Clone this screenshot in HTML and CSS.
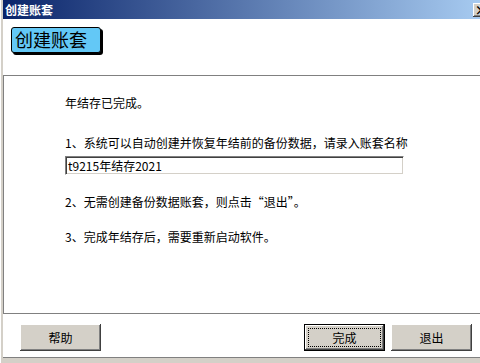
FILE: index.html
```html
<!DOCTYPE html>
<html lang="zh-CN">
<head>
<meta charset="utf-8">
<title>创建账套</title>
<link rel="stylesheet" href="styles.css">
</head>
<body>
<div class="window">
  <div class="titlebar">
    <span class="title">创建账套</span>
    <span class="close">×</span>
  </div>
  <div class="client">
    <div class="header">
      <div class="label">创建账套</div>
    </div>
    <div class="panel">
      <p class="line first">年结存已完成。</p>
      <p class="line second">1、系统可以自动创建并恢复年结前的备份数据，请录入账套名称</p>
      <div class="input">t9215年结存2021</div>
      <p class="line third">2、无需创建备份数据账套，则点击“退出”。</p>
      <p class="line fourth">3、完成年结存后，需要重新启动软件。</p>
    </div>
    <div class="footer">
      <div class="btn">帮助</div>
      <div class="right">
        <div class="btn default"><span class="focus">完成</span></div>
        <div class="btn">退出</div>
      </div>
    </div>
  </div>
</div>
</body>
</html>
```
FILE: styles.css
```css
* { box-sizing: border-box; }
html, body { margin: 0; padding: 0; }
body {
  width: 480px;
  height: 363px;
  overflow: hidden;
  font-family: "Noto Sans CJK SC", "Liberation Sans", sans-serif;
  font-size: 12px;
  color: #000;
}
.window {
  width: 480px;
  height: 363px;
  background: #d4d0c8;
  display: flex;
  flex-direction: column;
  overflow: hidden;
  border-left: 1px solid #ffffff;
}
.titlebar {
  height: 19px;
  margin-left: 2px;
  background: linear-gradient(to right, #0a246a, #a6caf0);
  display: flex;
  justify-content: space-between;
  align-items: flex-start;
  color: #fff;
  font-weight: bold;
  font-size: 12px;
  line-height: 19px;
  padding-left: 2px;
}
.close {
  width: 16px;
  height: 14px;
  margin-top: 3px;
  margin-right: -9px;
  background: #d4d0c8;
  color: #000;
  font-size: 13px;
  line-height: 13px;
  text-align: center;
  font-weight: bold;
  box-shadow: inset -1px -1px #404040, inset 1px 1px #fff, inset -2px -2px #808080;
}
.client {
  height: 339px;
  margin-left: 2px;
  background: #fff;
  display: flex;
  flex-direction: column;
  border-bottom: 1px solid #808080;
}
.header {
  height: 56px;
  padding: 8px 0 0 8px;
}
.label {
  width: 90px;
  height: 26px;
  border: 1px solid #000;
  border-radius: 3px;
  background: #63c8f6;
  box-shadow: 2px 2px 0 #000;
  font-size: 18px;
  line-height: 23px;
  padding-left: 3px;
}
.panel {
  height: 239px;
  border-top: 1px solid #808080;
  border-left: 1px solid #808080;
  border-bottom: 1px solid #808080;
  padding-left: 61px;
}
.line {
  margin: 0;
  line-height: 14px;
  white-space: nowrap;
}
.first { margin-top: 20px; }
.second { margin-top: 26px; }
.input {
  width: 339px;
  height: 19px;
  margin-top: 6px;
  border-top: 1px solid #808080;
  border-left: 1px solid #808080;
  border-bottom: 1px solid #fff;
  border-right: 1px solid #fff;
  box-shadow: inset 1px 1px #404040, inset -1px -1px #d4d0c8;
  padding-left: 2px;
  line-height: 17px;
  white-space: nowrap;
}
.third { margin-top: 20px; }
.fourth { margin-top: 21px; }
.footer {
  flex: 1;
  display: flex;
  justify-content: space-between;
  align-items: flex-start;
  padding: 10px 8px 0 17px;
}
.right {
  display: flex;
  gap: 6px;
}
.btn {
  width: 81px;
  height: 27px;
  background: #d4d0c8;
  box-shadow: inset -1px -1px #404040, inset 1px 1px #fff, inset -2px -2px #808080;
  display: flex;
  align-items: center;
  justify-content: center;
  line-height: 14px;
}
.btn.default {
  border: 1px solid #000;
  padding: 3px;
  box-shadow: inset -1px -1px #404040, inset 1px 1px #fff, inset -2px -2px #808080;
}
.focus {
  flex: 1;
  align-self: stretch;
  border: 1px dotted #000;
  display: flex;
  align-items: center;
  justify-content: center;
}
```
